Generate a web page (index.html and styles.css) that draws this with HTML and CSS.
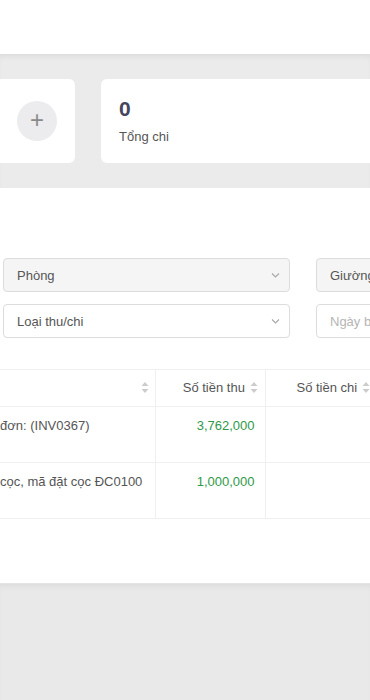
FILE: index.html
```html
<!DOCTYPE html>
<html lang="vi">
<head>
    <meta charset="UTF-8">
    <meta name="viewport" content="width=device-width, initial-scale=1.0">
    <title>Thu chi</title>
    <link rel="stylesheet" href="styles.css">
</head>
<body>
    <div class="topbar"></div>

    <div class="stats">
        <div class="stat-card add-card">
            <div class="add-btn">+</div>
        </div>
        <div class="stat-card total-card">
            <div class="stat-value">0</div>
            <div class="stat-label">Tổng chi</div>
        </div>
    </div>

    <div class="content">
        <div class="filters">
            <div class="select disabled">
                <span>Phòng</span>
                <svg class="chev" width="9" height="6" viewBox="0 0 9 6"><path d="M1 1.5l3.5 3.5 3.5-3.5" fill="none" stroke="#a8a8a8" stroke-width="1.1"/></svg>
            </div>
            <div class="select disabled">
                <span>Giường</span>
            </div>
            <div class="select">
                <span>Loại thu/chi</span>
                <svg class="chev" width="9" height="6" viewBox="0 0 9 6"><path d="M1 1.5l3.5 3.5 3.5-3.5" fill="none" stroke="#a8a8a8" stroke-width="1.1"/></svg>
            </div>
            <div class="select">
                <span class="placeholder">Ngày bắt đầu</span>
            </div>
        </div>

        <table class="data-table">
            <colgroup>
                <col class="w-desc">
                <col class="w-in">
                <col class="w-out">
            </colgroup>
            <thead>
                <tr>
                    <th class="col-desc">
                        <span class="sorter"><svg width="8" height="11" viewBox="0 0 8 11"><path d="M4 0l3.5 4h-7z M4 11l3.5-4h-7z" fill="#cccccc"/></svg></span>
                    </th>
                    <th class="col-in">Số tiền thu <span class="sorter"><svg width="8" height="11" viewBox="0 0 8 11"><path d="M4 0l3.5 4h-7z M4 11l3.5-4h-7z" fill="#cccccc"/></svg></span></th>
                    <th class="col-out">Số tiền chi <span class="sorter"><svg width="8" height="11" viewBox="0 0 8 11"><path d="M4 0l3.5 4h-7z M4 11l3.5-4h-7z" fill="#cccccc"/></svg></span></th>
                </tr>
            </thead>
            <tbody>
                <tr>
                    <td class="col-desc">đơn: (INV0367)</td>
                    <td class="col-in amount">3,762,000</td>
                    <td class="col-out"></td>
                </tr>
                <tr>
                    <td class="col-desc">cọc, mã đặt cọc ĐC0100</td>
                    <td class="col-in amount">1,000,000</td>
                    <td class="col-out"></td>
                </tr>
            </tbody>
        </table>
    </div>

    <div class="footer-space"></div>
</body>
</html>
```

FILE: styles.css
```css
body {
    margin: 0;
    font-family: "Liberation Sans", Arial, sans-serif;
    font-size: 13px;
    color: #555555;
    background-color: #e9e9e9;
    overflow: hidden;
}
.topbar {
    height: 54px;
    background-color: #ffffff;
}
.stats {
    display: flex;
    gap: 26px;
    padding: 25px 0 25px 0;
    background-color: #ebebeb;
    box-shadow: inset 0 5px 6px -3px rgba(0, 0, 0, 0.07);
}
.stat-card {
    height: 84px;
    background-color: #ffffff;
    border-radius: 6px;
    box-sizing: border-box;
}
.add-card {
    width: 75px;
    border-radius: 0 6px 6px 0;
    display: flex;
    align-items: center;
    padding-left: 17px;
}
.add-btn {
    width: 40px;
    height: 40px;
    border-radius: 50%;
    background-color: #ececee;
    color: #8a8a8a;
    font-size: 24px;
    font-weight: 300;
    line-height: 38px;
    text-align: center;
}
.total-card {
    flex: 1;
    margin-right: -20px;
    padding: 18px 18px;
}
.stat-value {
    font-size: 21px;
    font-weight: bold;
    line-height: 24px;
    color: #45455c;
}
.stat-label {
    margin-top: 8px;
    font-size: 13px;
    color: #555555;
}
.content {
    height: 395px;
    background-color: #ffffff;
    padding-top: 70px;
    box-sizing: border-box;
}
.filters {
    display: grid;
    grid-template-columns: 287px 1fr;
    gap: 12px 26px;
    margin-left: 3px;
    margin-right: -30px;
}
.select {
    height: 34px;
    border: 1px solid #dcdcdc;
    border-radius: 4px;
    box-sizing: border-box;
    display: flex;
    align-items: center;
    justify-content: space-between;
    padding: 0 9px 0 13px;
    color: #555555;
    white-space: nowrap;
}
.select.disabled {
    background-color: #f5f5f5;
}
.placeholder {
    color: #b5b5b5;
}
.data-table {
    margin-top: 31px;
    border-collapse: collapse;
    width: 410px;
    table-layout: fixed;
}
.w-desc {
    width: 155px;
}
.w-in {
    width: 110px;
}
.w-out {
    width: 145px;
}
.data-table th,
.data-table td {
    border-top: 1px solid #f0f0f0;
    border-bottom: 1px solid #f0f0f0;
    font-weight: normal;
    color: #555555;
    white-space: nowrap;
    overflow: hidden;
    box-sizing: border-box;
}
.data-table th {
    height: 37px;
    padding: 0 7px 0 0;
}
.data-table td {
    height: 56px;
    vertical-align: top;
    padding: 11px 10px 0 0;
    line-height: 16px;
}
.data-table .col-desc {
    text-align: left;
    padding-left: 0;
}
.data-table th.col-desc {
    text-align: right;
    padding-right: 6px;
}
.data-table .col-in {
    text-align: right;
    border-left: 1px solid #f0f0f0;
}
.data-table .col-out {
    border-left: 1px solid #f0f0f0;
    text-align: left;
}
.data-table th.col-out {
    padding-left: 31px;
}
.sorter {
    display: inline-block;
    vertical-align: -1px;
    margin-left: 1px;
}
.data-table td.amount {
    color: #2e9a48;
}
.footer-space {
    height: 117px;
    background-color: #e9e9e9;
    box-shadow: inset 0 5px 6px -3px rgba(0, 0, 0, 0.06);
    border-top: 1px solid #e4e4e4;
}
```
